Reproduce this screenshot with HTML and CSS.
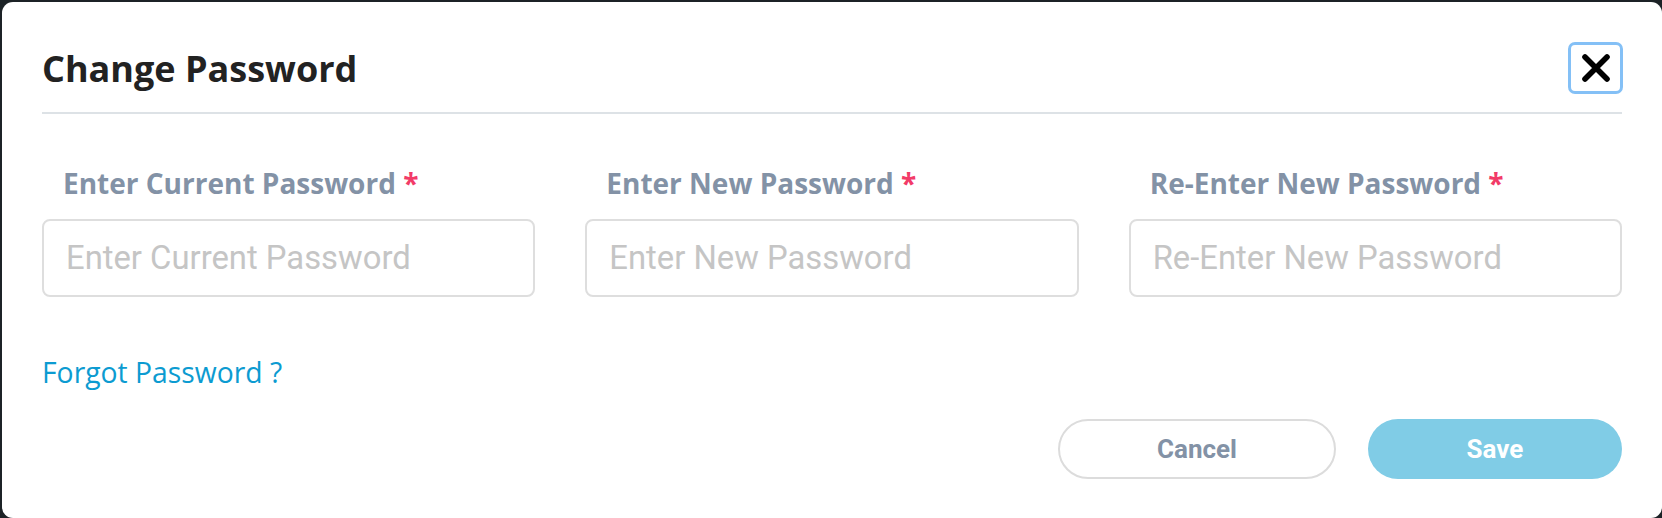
FILE: index.html
```html
<!DOCTYPE html>
<html lang="en">
<head>
<meta charset="utf-8">
<title>Change Password</title>
<link rel="stylesheet" href="styles.css">
</head>
<body>
<div class="modal">
  <header class="modal-header">
    <h2 class="title">Change Password</h2>
    <button class="close" type="button" aria-label="Close">
      <svg width="30" height="30" viewBox="0 0 30 30" aria-hidden="true">
        <path d="M4 4 L26 26 M26 4 L4 26" stroke="#000" stroke-width="5.6" stroke-linecap="round" fill="none"/>
      </svg>
    </button>
  </header>
  <div class="fields">
    <div class="field">
      <label class="label">Enter Current Password <span class="req">*</span></label>
      <input class="input" type="password" placeholder="Enter Current Password">
    </div>
    <div class="field">
      <label class="label">Enter New Password <span class="req">*</span></label>
      <input class="input" type="password" placeholder="Enter New Password">
    </div>
    <div class="field">
      <label class="label">Re-Enter New Password <span class="req">*</span></label>
      <input class="input" type="password" placeholder="Re-Enter New Password">
    </div>
  </div>
  <a class="forgot" href="#">Forgot Password ?</a>
  <div class="actions">
    <button class="btn cancel" type="button">Cancel</button>
    <button class="btn save" type="button">Save</button>
  </div>
</div>
</body>
</html>
```

FILE: styles.css
```css
html, body {
  margin: 0;
  padding: 0;
  background: #1c2226;
  height: 100%;
}
body {
  padding: 2px 0 0 2px;
  box-sizing: border-box;
  overflow: hidden;
}
.modal {
  background: #fff;
  border-radius: 11px;
  height: 516px;
  box-sizing: border-box;
  padding: 40px 40px 0 40px;
  font-family: "Open Sans", "Noto Sans", sans-serif;
}
.modal-header {
  display: flex;
  align-items: center;
  justify-content: space-between;
  height: 52px;
  padding-bottom: 18px;
  border-bottom: 2px solid #dde2e6;
}
.title {
  margin: 0;
  font-size: 36px;
  line-height: 49px;
  font-weight: 700;
  color: #222;
}
.close {
  width: 55px;
  height: 52px;
  box-sizing: border-box;
  border: 3px solid #84c0f6;
  border-radius: 7px;
  background: #fff;
  padding: 0;
  display: flex;
  align-items: center;
  justify-content: center;
  margin-right: -1px;
}
.close svg { display: block; }
.fields {
  display: grid;
  grid-template-columns: repeat(3, 1fr);
  column-gap: 50px;
  margin-top: 50px;
}
.field {
  display: flex;
  flex-direction: column;
}
.label {
  font-size: 28px;
  line-height: 38px;
  font-weight: 700;
  color: #8392a6;
  padding-left: 21px;
  margin-bottom: 17px;
}
.req { color: #f23b68; }
.input {
  height: 78px;
  box-sizing: border-box;
  border: 2px solid #dedede;
  border-radius: 8px;
  padding: 0 22px;
  font-family: Roboto, "Liberation Sans", sans-serif;
  font-size: 32.8px;
  color: #333;
  outline: none;
  width: 100%;
}
.input::placeholder { color: #c5c5c5; }
.forgot {
  display: block;
  width: max-content;
  margin-top: 56px;
  font-size: 28.3px;
  line-height: 38px;
  color: #0c9bd1;
  text-decoration: none;
}
.actions {
  display: flex;
  justify-content: flex-end;
  gap: 32px;
  margin-top: 28px;
}
.btn {
  height: 60px;
  border-radius: 30px;
  font-family: Roboto, "Liberation Sans", sans-serif;
  font-weight: 700;
  font-size: 26px;
  box-sizing: border-box;
}
.cancel {
  width: 278px;
  background: #fff;
  border: 2px solid #dcdcdc;
  color: #8392a6;
}
.save {
  width: 254px;
  background: #80cce6;
  border: 0;
  color: #fff;
}
```
